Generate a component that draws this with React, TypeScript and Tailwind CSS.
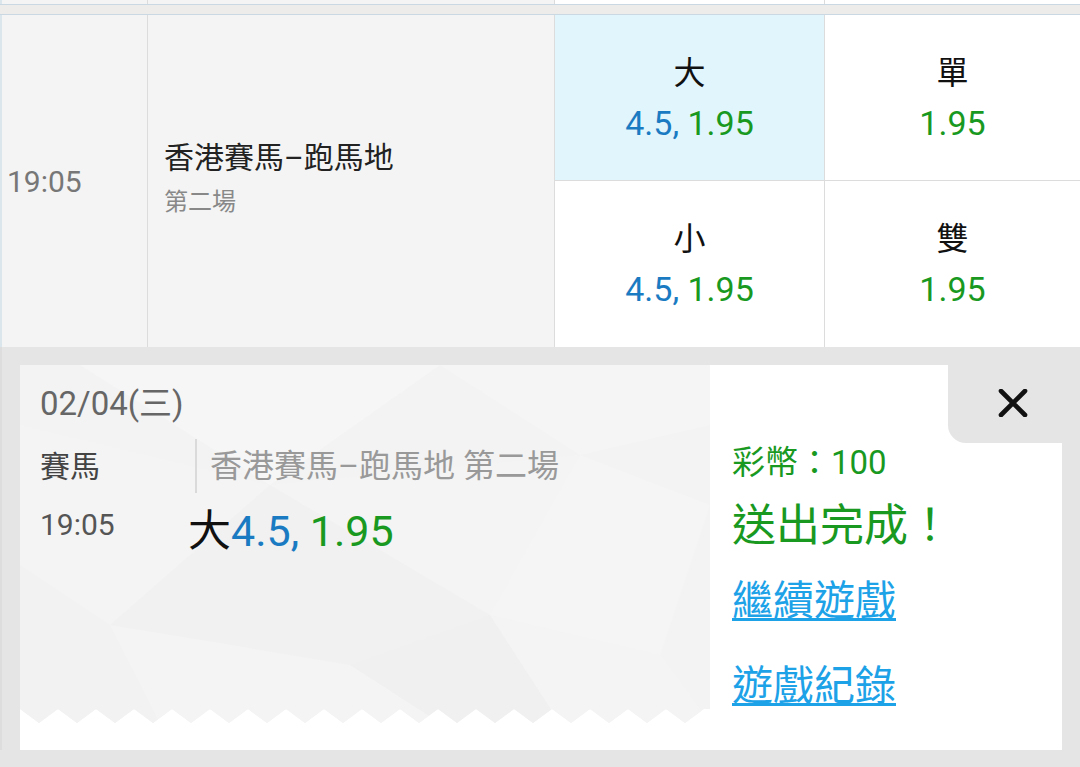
const TICKET_W = 690;
const TICKET_H = 358;

function zigzagPoints() {
  const pts: string[] = ["0,0", `${TICKET_W},0`];
  const peak = 344;
  const valley = TICKET_H;
  const step = 38;
  const tail: string[] = [];
  for (let x = 0; x <= TICKET_W + step; x += step) {
    tail.push(`${Math.min(x, TICKET_W)},${peak}`);
    if (x + step / 2 <= TICKET_W) tail.push(`${x + step / 2},${valley}`);
  }
  return pts.concat(tail.reverse()).join(" ");
}

const Odds = ({ line, price }: { line?: string; price: string }) => (
  <div className="text-[34px] leading-[50px]">
    {line && <span className="text-[#1b7bc2]">{line}, </span>}
    <span className="text-[#19991f]">{price}</span>
  </div>
);

const OddsCell = ({ label, line, price, active }: { label: string; line?: string; price: string; active?: boolean }) => (
  <div className={`flex flex-col items-center justify-center ${active ? "bg-[#e1f5fd]" : "bg-white"}`}>
    <div className="text-[32px] leading-[50px] text-[#111]">{label}</div>
    <Odds line={line} price={price} />
  </div>
);

const TicketBackground = () => (
  <svg className="absolute left-0 top-0" width={TICKET_W} height={TICKET_H} viewBox={`0 0 ${TICKET_W} ${TICKET_H}`}>
    <defs>
      <clipPath id="zz">
        <polygon points={zigzagPoints()} />
      </clipPath>
    </defs>
    <g clipPath="url(#zz)">
      <rect width={TICKET_W} height={TICKET_H} fill="#f3f3f3" />
      <polygon points="60,0 420,0 250,120" fill="#f6f6f6" />
      <polygon points="420,0 690,0 690,60 560,90" fill="#f5f5f5" />
      <polygon points="0,60 250,120 90,260 0,200" fill="#f4f4f4" />
      <polygon points="250,120 560,90 470,250" fill="#f4f4f4" />
      <polygon points="90,260 250,120 470,250 330,300" fill="#f1f1f1" />
      <polygon points="470,250 560,90 690,140 640,290" fill="#f5f5f5" />
      <polygon points="0,200 90,260 140,358 0,358" fill="#f2f2f2" />
      <polygon points="140,358 90,260 330,300 420,358" fill="#f4f4f4" />
      <polygon points="330,300 470,250 540,358 420,358" fill="#f0f0f0" />
      <polygon points="470,250 640,290 690,358 540,358" fill="#f4f4f4" />
    </g>
  </svg>
);

export default function App() {
  return (
    <div className="w-[1080px] h-[767px] overflow-hidden bg-[#e5e5e5] font-[Roboto,'Noto_Sans_CJK_TC',sans-serif]">
      {/* previous row edge */}
      <div className="grid grid-cols-[146px_407px_270px_1fr] h-[4px] border-l-2 border-[#dbe5ec]">
        <div className="bg-[#f4f4f4] border-r border-[#dcdcdc]" />
        <div className="bg-[#f4f4f4] border-r border-[#dcdcdc]" />
        <div className="bg-white border-r border-[#dcdcdc]" />
        <div className="bg-white" />
      </div>
      <div className="h-[11px] bg-[#eeecea] border-y border-[#c9d8e2]" />

      {/* race row */}
      <div className="grid grid-cols-[146px_407px_270px_1fr] h-[332px] border-l-2 border-[#dbe5ec]">
        <div className="bg-[#f4f4f4] border-r border-[#dcdcdc] flex items-center pl-[5px] text-[30px] text-[#777]">
          19:05
        </div>
        <div className="bg-[#f4f4f4] border-r border-[#dcdcdc] flex flex-col justify-center pl-[16px] pb-[2px]">
          <div className="text-[30px] leading-[44px] text-[#222]">香港賽馬–跑馬地</div>
          <div className="text-[24px] leading-[44px] text-[#888]">第二場</div>
        </div>
        <div className="grid grid-rows-2 border-r border-[#dcdcdc]">
          <div className="border-b border-[#dcdcdc] grid">
            <OddsCell label="大" line="4.5" price="1.95" active />
          </div>
          <OddsCell label="小" line="4.5" price="1.95" />
        </div>
        <div className="grid grid-rows-2">
          <div className="border-b border-[#dcdcdc] grid">
            <OddsCell label="單" price="1.95" />
          </div>
          <OddsCell label="雙" price="1.95" />
        </div>
      </div>

      {/* bet slip */}
      <div className="px-[18px] pt-[18px] border-l-2 border-[#dddddd]">
        <div className="flex h-[385px] bg-white">
          <div className="relative w-[690px] h-full">
            <TicketBackground />
            <div className="relative pl-[20px] pt-[19px]">
              <div className="text-[33px] leading-[40px] text-[#666]">02/04(三)</div>
              <div className="flex items-center mt-[14px] h-[56px]">
                <div className="w-[155px] text-[30px] text-[#444]">賽馬</div>
                <div className="h-[54px] border-l-2 border-[#dadada]" />
                <div className="pl-[13px] text-[32px] text-[#999]">香港賽馬–跑馬地 第二場</div>
              </div>
              <div className="flex items-center mt-[12px] h-[50px]">
                <div className="w-[148px] mb-[14px] text-[30px] text-[#555]">19:05</div>
                <div className="text-[43px] leading-[50px]">
                  <span className="text-[#111]">大</span>
                  <span className="text-[#1b7bc2]">4.5, </span>
                  <span className="text-[#19991f]">1.95</span>
                </div>
              </div>
            </div>
          </div>

          <div className="flex-1 flex flex-col">
            <div className="flex justify-end h-[78px]">
              <div className="w-[114px] h-full bg-[#e5e5e5] rounded-bl-[18px] flex items-center justify-center pl-[16px] pb-[3px]">
                <svg width="30" height="28" viewBox="0 0 30 28">
                  <path d="M3 2 L27 26 M27 2 L3 26" stroke="#111" strokeWidth="4.6" strokeLinecap="round" />
                </svg>
              </div>
            </div>
            <div className="pl-[22px] flex flex-col items-start">
              <div className="text-[33px] leading-[40px] text-[#19991f]">彩幣：100</div>
              <div className="mt-[15px] text-[44px] leading-[56px] text-[#19991f]">送出完成！</div>
              <a className="mt-[22px] text-[41px] leading-[50px] text-[#1da2e8] underline decoration-[3px] underline-offset-[3px] cursor-pointer">
                繼續遊戲
              </a>
              <a className="mt-[35px] text-[41px] leading-[50px] text-[#1da2e8] underline decoration-[3px] underline-offset-[3px] cursor-pointer">
                遊戲紀錄
              </a>
            </div>
          </div>
        </div>
      </div>
    </div>
  );
}
